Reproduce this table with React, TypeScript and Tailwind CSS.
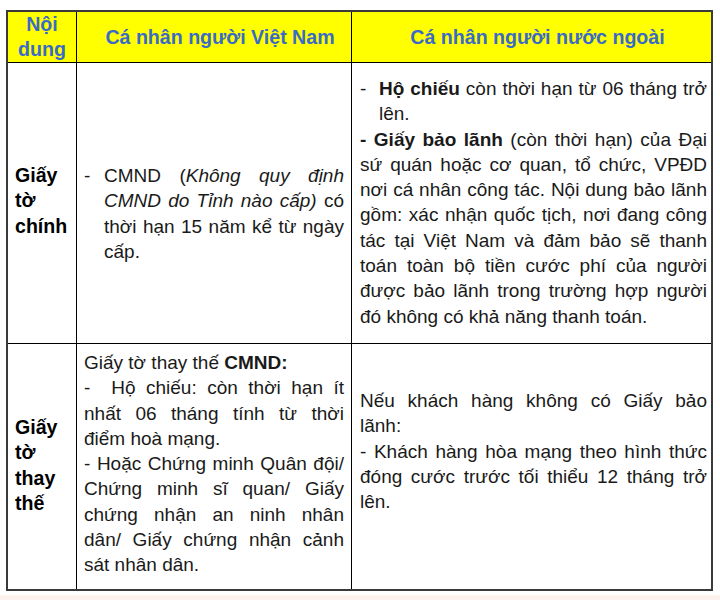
import React from 'react';

const font = { fontFamily: '"Liberation Sans", Arial, sans-serif' };

// one justified line (forced spread) or a plain left-aligned last line
function J({ children, last }: { children: React.ReactNode; last?: boolean }) {
  return (
    <div className={last ? 'whitespace-nowrap text-left' : 'whitespace-nowrap text-justify [text-align-last:justify]'}>
      {children}
    </div>
  );
}

export default function App() {
  return (
    <div className="w-[720px] h-[600px] bg-white relative overflow-hidden" style={font}>
      <div className="pt-[10px] pl-[6px]">
        <div className="w-[707px] border-2 border-[#3a3a3a] text-[19px] leading-[25.3px] text-[#1a1a1a]">
          {/* Header */}
          <div className="grid grid-cols-[69px_275px_1fr] h-[51px] bg-[#ffff00] border-b border-black font-bold text-[19.6px] text-[#3a6bc6]">
            <div className="flex flex-col items-center justify-center border-r border-black">
              <span>Nội</span>
              <span>dung</span>
            </div>
            <div className="flex items-center justify-center pl-3 border-r border-black">Cá nhân người Việt Nam</div>
            <div className="flex items-center justify-center pl-3">Cá nhân người nước ngoài</div>
          </div>

          {/* Row 1 */}
          <div className="grid grid-cols-[69px_275px_1fr] h-[281px] border-b border-black">
            <div className="border-r border-black pl-[7px] pt-[100px] font-bold text-[19.6px] text-black">
              <div>Giấy</div>
              <div>tờ</div>
              <div>chính</div>
            </div>
            <div className="border-r border-black pl-[7px] pr-[7px] pt-[100px] flex">
              <div className="w-[20px] shrink-0">-</div>
              <div className="flex-1">
                <J>CMND (<i>Không quy định</i></J>
                <J><i>CMND do Tỉnh nào cấp)</i> có</J>
                <J>thời hạn 15 năm kể từ ngày</J>
                <J last>cấp.</J>
              </div>
            </div>
            <div className="pl-[8px] pr-[4px] pt-[13px]">
              <div className="flex">
                <div className="w-[19px] shrink-0">-</div>
                <div className="flex-1">
                  <J><b>Hộ chiếu</b> còn thời hạn từ 06 tháng trở</J>
                  <J last>lên.</J>
                </div>
              </div>
              <J><b>- Giấy bảo lãnh</b> (còn thời hạn) của Đại</J>
              <J>sứ quán hoặc cơ quan, tổ chức, VPĐD</J>
              <J>nơi cá nhân công tác. Nội dung bảo lãnh</J>
              <J>gồm: xác nhận quốc tịch, nơi đang công</J>
              <J>tác tại Việt Nam và đảm bảo sẽ thanh</J>
              <J>toán toàn bộ tiền cước phí của người</J>
              <J>được bảo lãnh trong trường hợp người</J>
              <J last>đó không có khả năng thanh toán.</J>
            </div>
          </div>

          {/* Row 2 */}
          <div className="grid grid-cols-[69px_275px_1fr] h-[245px]">
            <div className="border-r border-black pl-[7px] pt-[71px] font-bold text-[19.6px] text-black">
              <div>Giấy</div>
              <div>tờ</div>
              <div>thay</div>
              <div>thế</div>
            </div>
            <div className="border-r border-black pl-[7px] pr-[7px] pt-[6px]">
              <J last>Giấy tờ thay thế <b>CMND:</b></J>
              <J>-&nbsp;&nbsp;Hộ chiếu: còn thời hạn ít</J>
              <J>nhất 06 tháng tính từ thời</J>
              <J last>điểm hoà mạng.</J>
              <J>- Hoặc Chứng minh Quân đội/</J>
              <J>Chứng minh sĩ quan/ Giấy</J>
              <J>chứng nhận an ninh nhân</J>
              <J>dân/ Giấy chứng nhận cảnh</J>
              <J last>sát nhân dân.</J>
            </div>
            <div className="pl-[8px] pr-[4px] pt-[44px]">
              <J>Nếu khách hàng không có Giấy bảo</J>
              <J last>lãnh:</J>
              <J>- Khách hàng hòa mạng theo hình thức</J>
              <J>đóng cước trước tối thiểu 12 tháng trở</J>
              <J last>lên.</J>
            </div>
          </div>
        </div>
      </div>
      <div className="mt-[4px] h-[10px] bg-[#fdf2ee]" />
    </div>
  );
}
